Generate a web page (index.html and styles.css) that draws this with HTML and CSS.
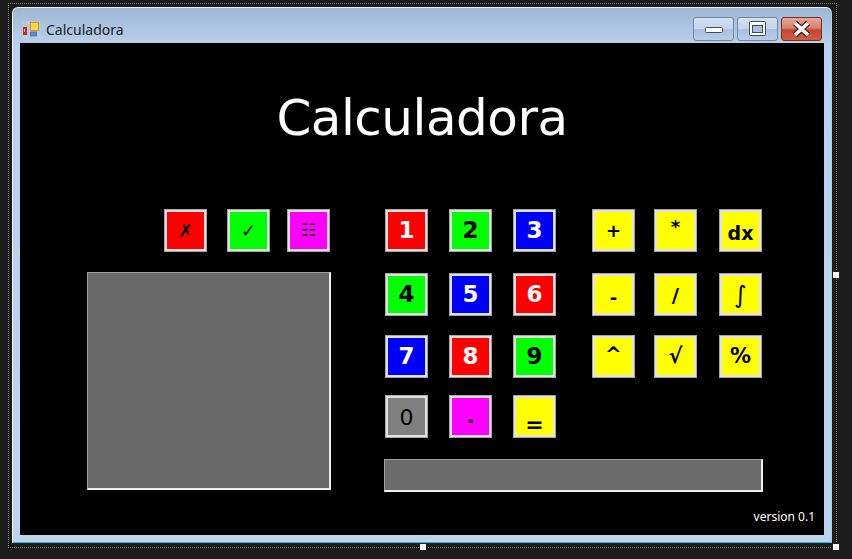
FILE: index.html
```html
<!DOCTYPE html>
<html lang="es">
<head>
<meta charset="utf-8">
<title>Calculadora</title>
<link rel="stylesheet" href="styles.css">
</head>
<body>
<div class="desk">
  <div class="window">
    <div class="titlebar">
      <span class="app-icon">
        <svg width="18" height="17" viewBox="0 0 18 17">
          <rect x="0" y="0" width="18" height="17" fill="#c3ccd6" opacity="0.5"/>
          <rect x="1" y="6" width="4" height="8" fill="#c8281c"/>
          <rect x="2" y="8" width="1" height="3" fill="#f5c0b0"/>
          <rect x="8.5" y="1.5" width="8" height="8" fill="#f7d44a" stroke="#d09a18"/>
          <rect x="8.5" y="11" width="6" height="4" fill="#5c8fd8" stroke="#3c6cb8" stroke-width="0.8"/>
        </svg>
      </span>
      <span class="caption">Calculadora</span>
      <div class="caption-buttons">
        <div class="cb cb-light">
          <svg width="41" height="24" viewBox="0 0 41 24"><rect x="12.5" y="10.5" width="17" height="5" rx="1" fill="#fff" stroke="#3c4b5f"/></svg>
        </div>
        <div class="cb cb-light">
          <svg width="41" height="24" viewBox="0 0 41 24"><rect x="12.5" y="4.5" width="16" height="14" rx="1" fill="#fff" stroke="#3c4b5f"/><rect x="15.5" y="8.5" width="10" height="7" fill="#a9c1dc" stroke="#3c4b5f"/></svg>
        </div>
        <div class="cb cb-close">
          <svg width="41" height="24" viewBox="0 0 41 24"><path d="M14 6 L27 18 M27 6 L14 18" stroke="#5a1e18" stroke-width="6"/><path d="M14 6 L27 18 M27 6 L14 18" stroke="#fff" stroke-width="3.6"/></svg>
        </div>
      </div>
    </div>
    <div class="client">
      <h1 class="heading">Calculadora</h1>
      <div class="main">
        <div class="left">
          <div class="tools">
            <div class="key red small">✗</div>
            <div class="key green small">✓</div>
            <div class="key magenta small tri">☷</div>
          </div>
          <div class="display-box"></div>
        </div>
        <div class="right">
          <div class="keys">
            <div class="numpad">
              <div class="key red white-t">1</div>
              <div class="key green">2</div>
              <div class="key blue white-t">3</div>
              <div class="key green">4</div>
              <div class="key blue white-t">5</div>
              <div class="key red white-t">6</div>
              <div class="key blue white-t">7</div>
              <div class="key red white-t">8</div>
              <div class="key green">9</div>
              <div class="key gray zero">0</div>
              <div class="key magenta dot">.</div>
              <div class="key yellow eq">=</div>
            </div>
            <div class="ops">
              <div class="key yellow op">+</div>
              <div class="key yellow op star">*</div>
              <div class="key yellow op dx">dx</div>
              <div class="key yellow op minus">-</div>
              <div class="key yellow op slash">/</div>
              <div class="key yellow op integral">∫</div>
              <div class="key yellow op caret">^</div>
              <div class="key yellow op root">√</div>
              <div class="key yellow op pct">%</div>
            </div>
          </div>
          <div class="input-bar"></div>
        </div>
      </div>
      <div class="version">version 0.1</div>
    </div>
  </div>
  <div class="selection"></div>
  <div class="handle h-right"></div>
  <div class="handle h-bottom"></div>
  <div class="handle h-corner"></div>
</div>
</body>
</html>
```
FILE: styles.css
```css
html, body {
  margin: 0;
  padding: 0;
}
body {
  background: #1c1c1c;
}
.desk {
  position: relative;
  width: 852px;
  height: 559px;
  box-sizing: border-box;
  padding: 7px 0 0 12px;
  overflow: hidden;
  background: #1c1c1c;
}
.window {
  width: 820px;
  height: 536px;
  box-sizing: border-box;
  border-top: 1px solid #eef4fa;
  border-left: 1px solid #eef4fa;
  border-right: 1px solid #9fd8ea;
  border-bottom: 1px solid #20bcdc;
  border-radius: 6px 6px 0 0;
  background: linear-gradient(#9db7d4 0px, #b9d1ea 36px, #bcd4ec 100%);
  padding: 0 7px 7px 7px;
}
.titlebar {
  height: 35px;
  box-sizing: border-box;
  padding-top: 7px;
  display: flex;
  align-items: center;
  font-family: "Noto Sans", "Open Sans", sans-serif;
}
.app-icon {
  display: flex;
  margin-left: 2px;
}
.caption {
  margin-left: 6px;
  font-size: 14px;
  color: #1a1a1a;
}
.caption-buttons {
  margin-left: auto;
  margin-right: 2px;
  align-self: flex-start;
  margin-top: 2px;
  display: flex;
  gap: 3px;
}
.cb {
  width: 41px;
  height: 24px;
  box-sizing: border-box;
  border-radius: 3px;
  display: flex;
  align-items: center;
  justify-content: center;
  overflow: hidden;
}
.cb svg {
  display: block;
  margin: -1px;
}
.cb-light {
  border: 1px solid #6f86a4;
  background: linear-gradient(#d3e1f1 0%, #c2d5eb 48%, #a9c2de 52%, #b6cde6 100%);
}
.cb-close {
  border: 1px solid #7a2b24;
  background: linear-gradient(#e8a697 0%, #d7826f 45%, #c6452f 55%, #d05e42 100%);
}
.client {
  height: 492px;
  background: #000;
  display: flex;
  flex-direction: column;
}
.heading {
  margin: 0;
  height: 166px;
  box-sizing: border-box;
  padding-top: 45px;
  text-align: center;
  font-family: "DejaVu Sans", sans-serif;
  font-weight: normal;
  font-size: 50px;
  line-height: 60px;
  color: #fff;
  letter-spacing: -0.5px;
}
.main {
  display: flex;
  padding-left: 67px;
}
.left {
  width: 244px;
  display: flex;
  flex-direction: column;
}
.tools {
  display: grid;
  grid-template-columns: 63px 60px 43px;
  padding-left: 77px;
}
.display-box {
  margin-top: 20px;
  width: 244px;
  height: 218px;
  box-sizing: border-box;
  background: #696969;
  border-top: 1px solid #a0a0a0;
  border-left: 1px solid #a0a0a0;
  border-right: 2px solid #f0f0f0;
  border-bottom: 2px solid #f0f0f0;
}
.right {
  margin-left: 53px;
  display: flex;
  flex-direction: column;
}
.keys {
  display: flex;
  padding-left: 1px;
}
.numpad {
  display: grid;
  grid-template-columns: 64px 64px 43px;
  grid-template-rows: 64px 62px 60px 43px;
  align-items: start;
}
.ops {
  margin-left: 36px;
  display: grid;
  grid-template-columns: 62px 65px 43px;
  grid-template-rows: 64px 62px 43px;
  align-items: start;
}
.input-bar {
  margin-top: 21px;
  width: 379px;
  height: 33px;
  box-sizing: border-box;
  background: #6b6b6b;
  border-top: 1px solid #a0a0a0;
  border-left: 1px solid #a0a0a0;
  border-right: 2px solid #f0f0f0;
  border-bottom: 2px solid #f0f0f0;
}
.version {
  margin-top: auto;
  margin-bottom: 10px;
  padding-right: 9px;
  text-align: right;
  font-family: "Noto Sans", "Open Sans", sans-serif;
  font-size: 12px;
  line-height: 16px;
  color: #fff;
}
.key {
  width: 43px;
  height: 43px;
  box-sizing: border-box;
  border: 1px solid #a6a6a6;
  box-shadow: inset 0 0 0 2px #e2e2e2;
  display: flex;
  align-items: center;
  justify-content: center;
  font-family: "DejaVu Sans", sans-serif;
  font-weight: bold;
  font-size: 23px;
  line-height: 1;
  color: #000;
}
.red { background: #ff0000; }
.green { background: #00ff00; }
.blue { background: #0000ff; }
.magenta { background: #ff00ff; }
.yellow { background: #ffff00; }
.gray { background: #808080; }
.white-t { color: #fff; }
.small { font-size: 18px; }
.tri { font-size: 17px; font-weight: normal; }
.zero { font-weight: normal; font-size: 22px; padding-top: 2px; }
.dot { font-size: 20px; padding-bottom: 2px; }
.eq { font-size: 22px; padding-top: 16px; }
.op { font-size: 18px; }
.star { padding-bottom: 8px; }
.dx { font-size: 19px; padding-top: 5px; }
.minus { padding-top: 6px; }
.slash { font-size: 20px; }
.integral { font-size: 24px; font-weight: normal; }
.caret { padding-bottom: 6px; font-size: 20px; }
.root { font-size: 21px; }
.pct { font-size: 21px; }
.selection {
  position: absolute;
  left: 8px;
  top: 3px;
  width: 827px;
  height: 543px;
  border: 1px dotted #7a7a7a;
  pointer-events: none;
}
.handle {
  position: absolute;
  width: 6px;
  height: 6px;
  background: #fff;
  border: 1px solid #222;
}
.h-right { left: 832px; top: 271px; }
.h-bottom { left: 419px; top: 543px; }
.h-corner { left: 832px; top: 543px; }
```
